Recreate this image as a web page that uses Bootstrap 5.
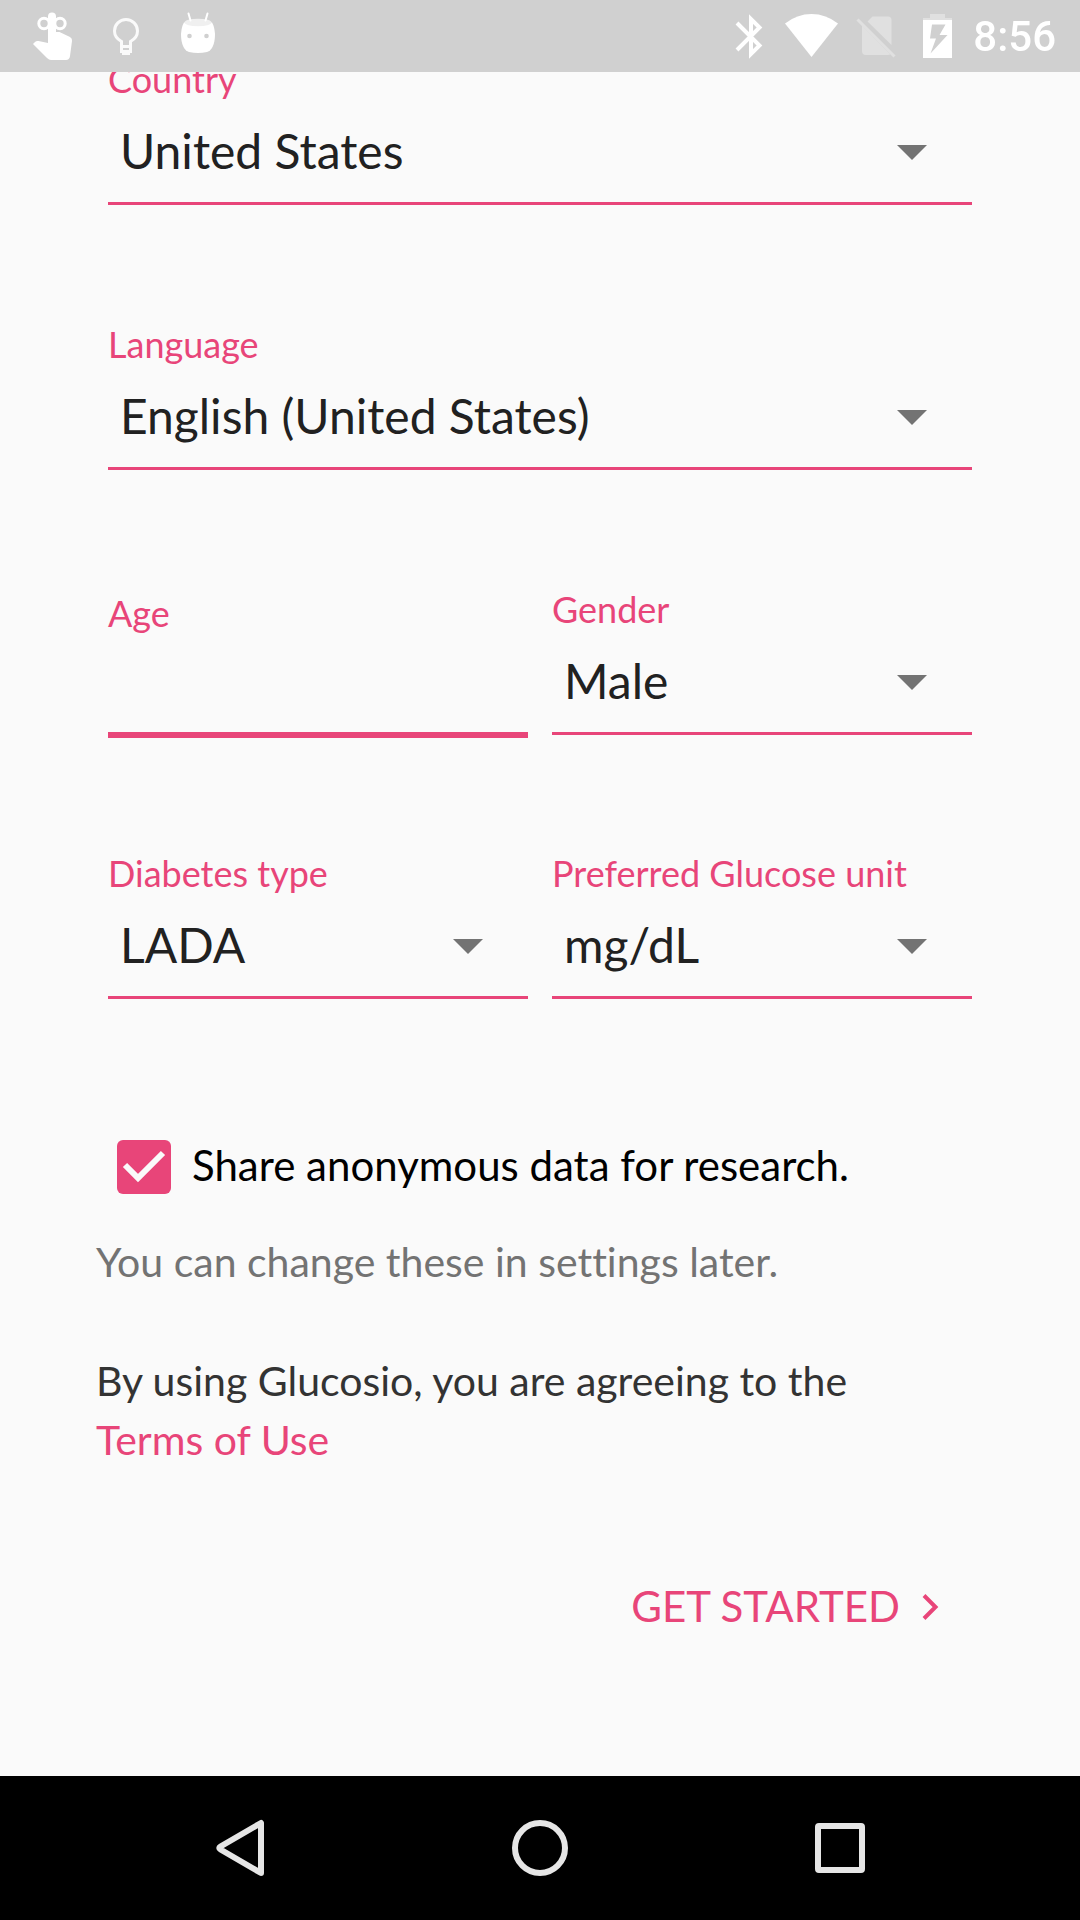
<!DOCTYPE html>
<html lang="en">
<head>
<meta charset="utf-8">
<meta name="viewport" content="width=device-width, initial-scale=1">
<title>Glucosio</title>
<link href="https://cdn.jsdelivr.net/npm/bootstrap@5.3.0/dist/css/bootstrap.min.css" rel="stylesheet">
<style>
:root { --pink: #e84579; }
body { background: #fafafa; color: #333; font-family: Lato, sans-serif; font-size: 42px; line-height: 59px; font-variant-ligatures: none; }
.status-bar { height: 72px; background: #d0d0d0; color: #fff; padding: 0 24px 0 18px; }
.status-bar svg { height: 72px; }
.clock { font: 500 42px/72px Roboto, sans-serif; margin-left: 4px; padding-top: 2px; }
.setup { padding: 57px 96px 60px; }
.fields { --bs-gutter-x: 24px; --bs-gutter-y: 0; margin: 0 0 117px; }
.fields-age { margin-bottom: 113px; }
.field-label { display: block; color: var(--pink); font-size: 36px; line-height: 44px; }
.line-select, .line-input {
  border: 0; border-bottom: 3px solid var(--pink); border-radius: 0; box-shadow: none;
  color: #212121; font-size: 48px; line-height: 58px;
}
.line-select {
  height: 104px; padding: 21px 80px 22px 12px; background-color: transparent;
  background-image: url("data:image/svg+xml,%3Csvg xmlns='http://www.w3.org/2000/svg' viewBox='0 0 30 15'%3E%3Cpath fill='%23737373' d='M0 0h30L15 15z'/%3E%3C/svg%3E");
  background-size: 30px 15px; background-position: right 45px top 44px;
}
.age-field { padding-top: 4px; }
.line-input, .line-input:focus { height: 103px; border-bottom-width: 6px; border-color: var(--pink); background: transparent; box-shadow: none; padding: 20px 12px; }
.share { gap: 21px; padding-left: 21px; margin: 137px 0 37px; color: #000; }
.share .form-check-input { width: 54px; height: 54px; margin: 4px 0 0; border-radius: 6px; border: 0; }
.share .form-check-input:checked {
  background-color: var(--pink); background-size: 54px 54px;
  background-image: url("data:image/svg+xml,%3Csvg xmlns='http://www.w3.org/2000/svg' viewBox='0 0 54 54'%3E%3Cpath fill='none' stroke='%23fafafa' stroke-width='6' d='M8 25l13 13L46 13'/%3E%3C/svg%3E");
}
.later, .terms { font-size: 41px; }
.later { color: #737373; margin-bottom: 60px; }
.terms { margin-bottom: 108px; }
.terms a, .start { color: var(--pink); text-decoration: none; }
.start { font-size: 42px; line-height: 59px; padding: 0; border: 0; margin-right: 44px; gap: 22px; }
.nav-keys { height: 144px; background: #000; padding: 0 8.333%; }
.nav-keys .btn { border: 0; padding: 0; flex: 1 1 0; }
</style>
<script src="https://cdn.jsdelivr.net/npm/bootstrap@5.3.0/dist/js/bootstrap.bundle.min.js"></script>
</head>
<body class="d-flex flex-column min-vh-100">
<header class="status-bar fixed-top d-flex align-items-center">
  <svg width="72" viewBox="18 0 72 72" aria-hidden="true">
    <path fill="#fff" d="M48 16.500a4 4 0 0 1 8 0V32h3.500L70 37q2.500 1.500 2 4l-2 15q-.5 4-4 4H51q-2 0-4-2L33 44l2-2q1.500-1.500 3.500-1L48 43z"/>
    <g fill="none" stroke="#fff" stroke-width="3"><circle cx="44" cy="23.500" r="5.200"/><circle cx="60" cy="23.500" r="5.200"/></g>
  </svg>
  <svg width="72" viewBox="90 0 72 72" aria-hidden="true">
    <path fill="none" stroke="#fafafa" stroke-width="3" d="M121.500 52V41.500C117 39 114.500 35 114.500 31a11.500 11.500 0 0 1 23 0c0 4-2.500 8-7 10.500V52"/>
    <path fill="#fafafa" d="M121 45h10v3h-10zM120 50h12v3h-2v2h-8v-2h-2z"/>
  </svg>
  <svg width="72" viewBox="162 0 72 72" aria-hidden="true">
    <path fill="#fff" d="M184 22.500h28q2.500 4 3 11.500 0 8-2.500 13-2 4-5.500 5-9 2-18 0-3.500-1-5.500-5-2.500-5-2.500-13 .5-7.500 3-11.500z"/>
    <ellipse cx="198" cy="22.500" rx="13.500" ry="3.800" fill="#f0f0f0"/>
    <path stroke="#fff" stroke-width="2" stroke-linecap="round" d="M188.500 13.500l2 7M207.500 13.500l-2 7"/>
    <circle cx="189.500" cy="36" r="2.300" fill="#d0d0d0"/><circle cx="206.500" cy="36" r="2.300" fill="#d0d0d0"/>
  </svg>
  <div class="d-flex align-items-center ms-auto">
    <svg width="63" viewBox="717 0 63 72" aria-hidden="true">
      <path fill="none" stroke="#fff" stroke-width="4" d="M737 23l22.500 22.500-8.500 8.500V19l8.500 8.500L737 50"/>
    </svg>
    <svg width="63" viewBox="780 0 63 72" aria-hidden="true">
      <path fill="#fff" d="M785 23.500Q797 14 811.500 14T838 23.500L811.500 57z"/>
    </svg>
    <svg width="63" viewBox="843 0 63 72" aria-hidden="true">
      <path fill="#e0e0e0" d="M872.500 16.500H888q3.500 0 3.500 3.500v25L867.500 21.500zM862 25.500V51q0 4 4 4h22q1.500 0 2.200-.7z"/>
      <path stroke="#e0e0e0" stroke-width="3" d="M857.500 19.500l37 37"/>
    </svg>
    <svg width="63" viewBox="906 0 63 72" aria-hidden="true">
      <path fill="#e0e0e0" d="M930 14h15v4h7v2h-29v-2h7z"/>
      <path fill="#fff" fill-rule="evenodd" d="M923 20h29v38h-29zM932 24.500l-2 14h6l-5.500 15L947.500 35h-8l6-10.500z"/>
    </svg>
    <span class="clock">8:56</span>
  </div>
</header>

<main class="setup flex-grow-1">
  <form>
    <div class="row fields">
      <div class="col-12">
        <label class="field-label" for="country">Country</label>
        <select class="form-select line-select" id="country"><option>United States</option></select>
      </div>
    </div>
    <div class="row fields">
      <div class="col-12">
        <label class="field-label" for="language">Language</label>
        <select class="form-select line-select" id="language"><option>English (United States)</option></select>
      </div>
    </div>
    <div class="row fields fields-age">
      <div class="col-6 age-field">
        <label class="field-label" for="age">Age</label>
        <input class="form-control line-input" id="age" type="text" inputmode="numeric">
      </div>
      <div class="col-6">
        <label class="field-label" for="gender">Gender</label>
        <select class="form-select line-select" id="gender"><option>Male</option></select>
      </div>
    </div>
    <div class="row fields mb-0">
      <div class="col-6">
        <label class="field-label" for="type">Diabetes type</label>
        <select class="form-select line-select" id="type"><option>LADA</option></select>
      </div>
      <div class="col-6">
        <label class="field-label" for="unit">Preferred Glucose unit</label>
        <select class="form-select line-select" id="unit"><option>mg/dL</option></select>
      </div>
    </div>
    <div class="share d-flex align-items-start">
      <input class="form-check-input flex-shrink-0" type="checkbox" id="share" checked>
      <label for="share">Share anonymous data for research.</label>
    </div>
    <p class="later">You can change these in settings later.</p>
    <p class="terms">By using Glucosio, you are agreeing to the<br><a href="#terms">Terms of Use</a></p>
    <div class="d-flex justify-content-end">
      <button class="btn start d-flex align-items-center" type="button">GET STARTED
        <svg width="18" height="28" viewBox="0 0 18 28" aria-hidden="true"><path fill="none" stroke="currentColor" stroke-width="4" d="M2 2.500L13.500 14 2 25.500"/></svg>
      </button>
    </div>
  </form>
</main>

<nav class="nav-keys d-flex align-items-center" aria-label="System">
  <button class="btn" type="button" aria-label="Back"><svg width="72" height="72" viewBox="0 0 72 72"><path fill="none" stroke="#e6e6e6" stroke-width="6" stroke-linejoin="round" d="M57 11v50L16.500 37.500q-2.500-1.500 0-3z"/></svg></button>
  <button class="btn" type="button" aria-label="Home"><svg width="72" height="72" viewBox="0 0 72 72"><circle cx="36" cy="36" r="25" fill="none" stroke="#e6e6e6" stroke-width="6"/></svg></button>
  <button class="btn" type="button" aria-label="Recent apps"><svg width="72" height="72" viewBox="0 0 72 72"><rect x="14" y="14" width="44" height="44" rx="1" fill="none" stroke="#e6e6e6" stroke-width="6" stroke-linejoin="round"/></svg></button>
</nav>
</body>
</html>
